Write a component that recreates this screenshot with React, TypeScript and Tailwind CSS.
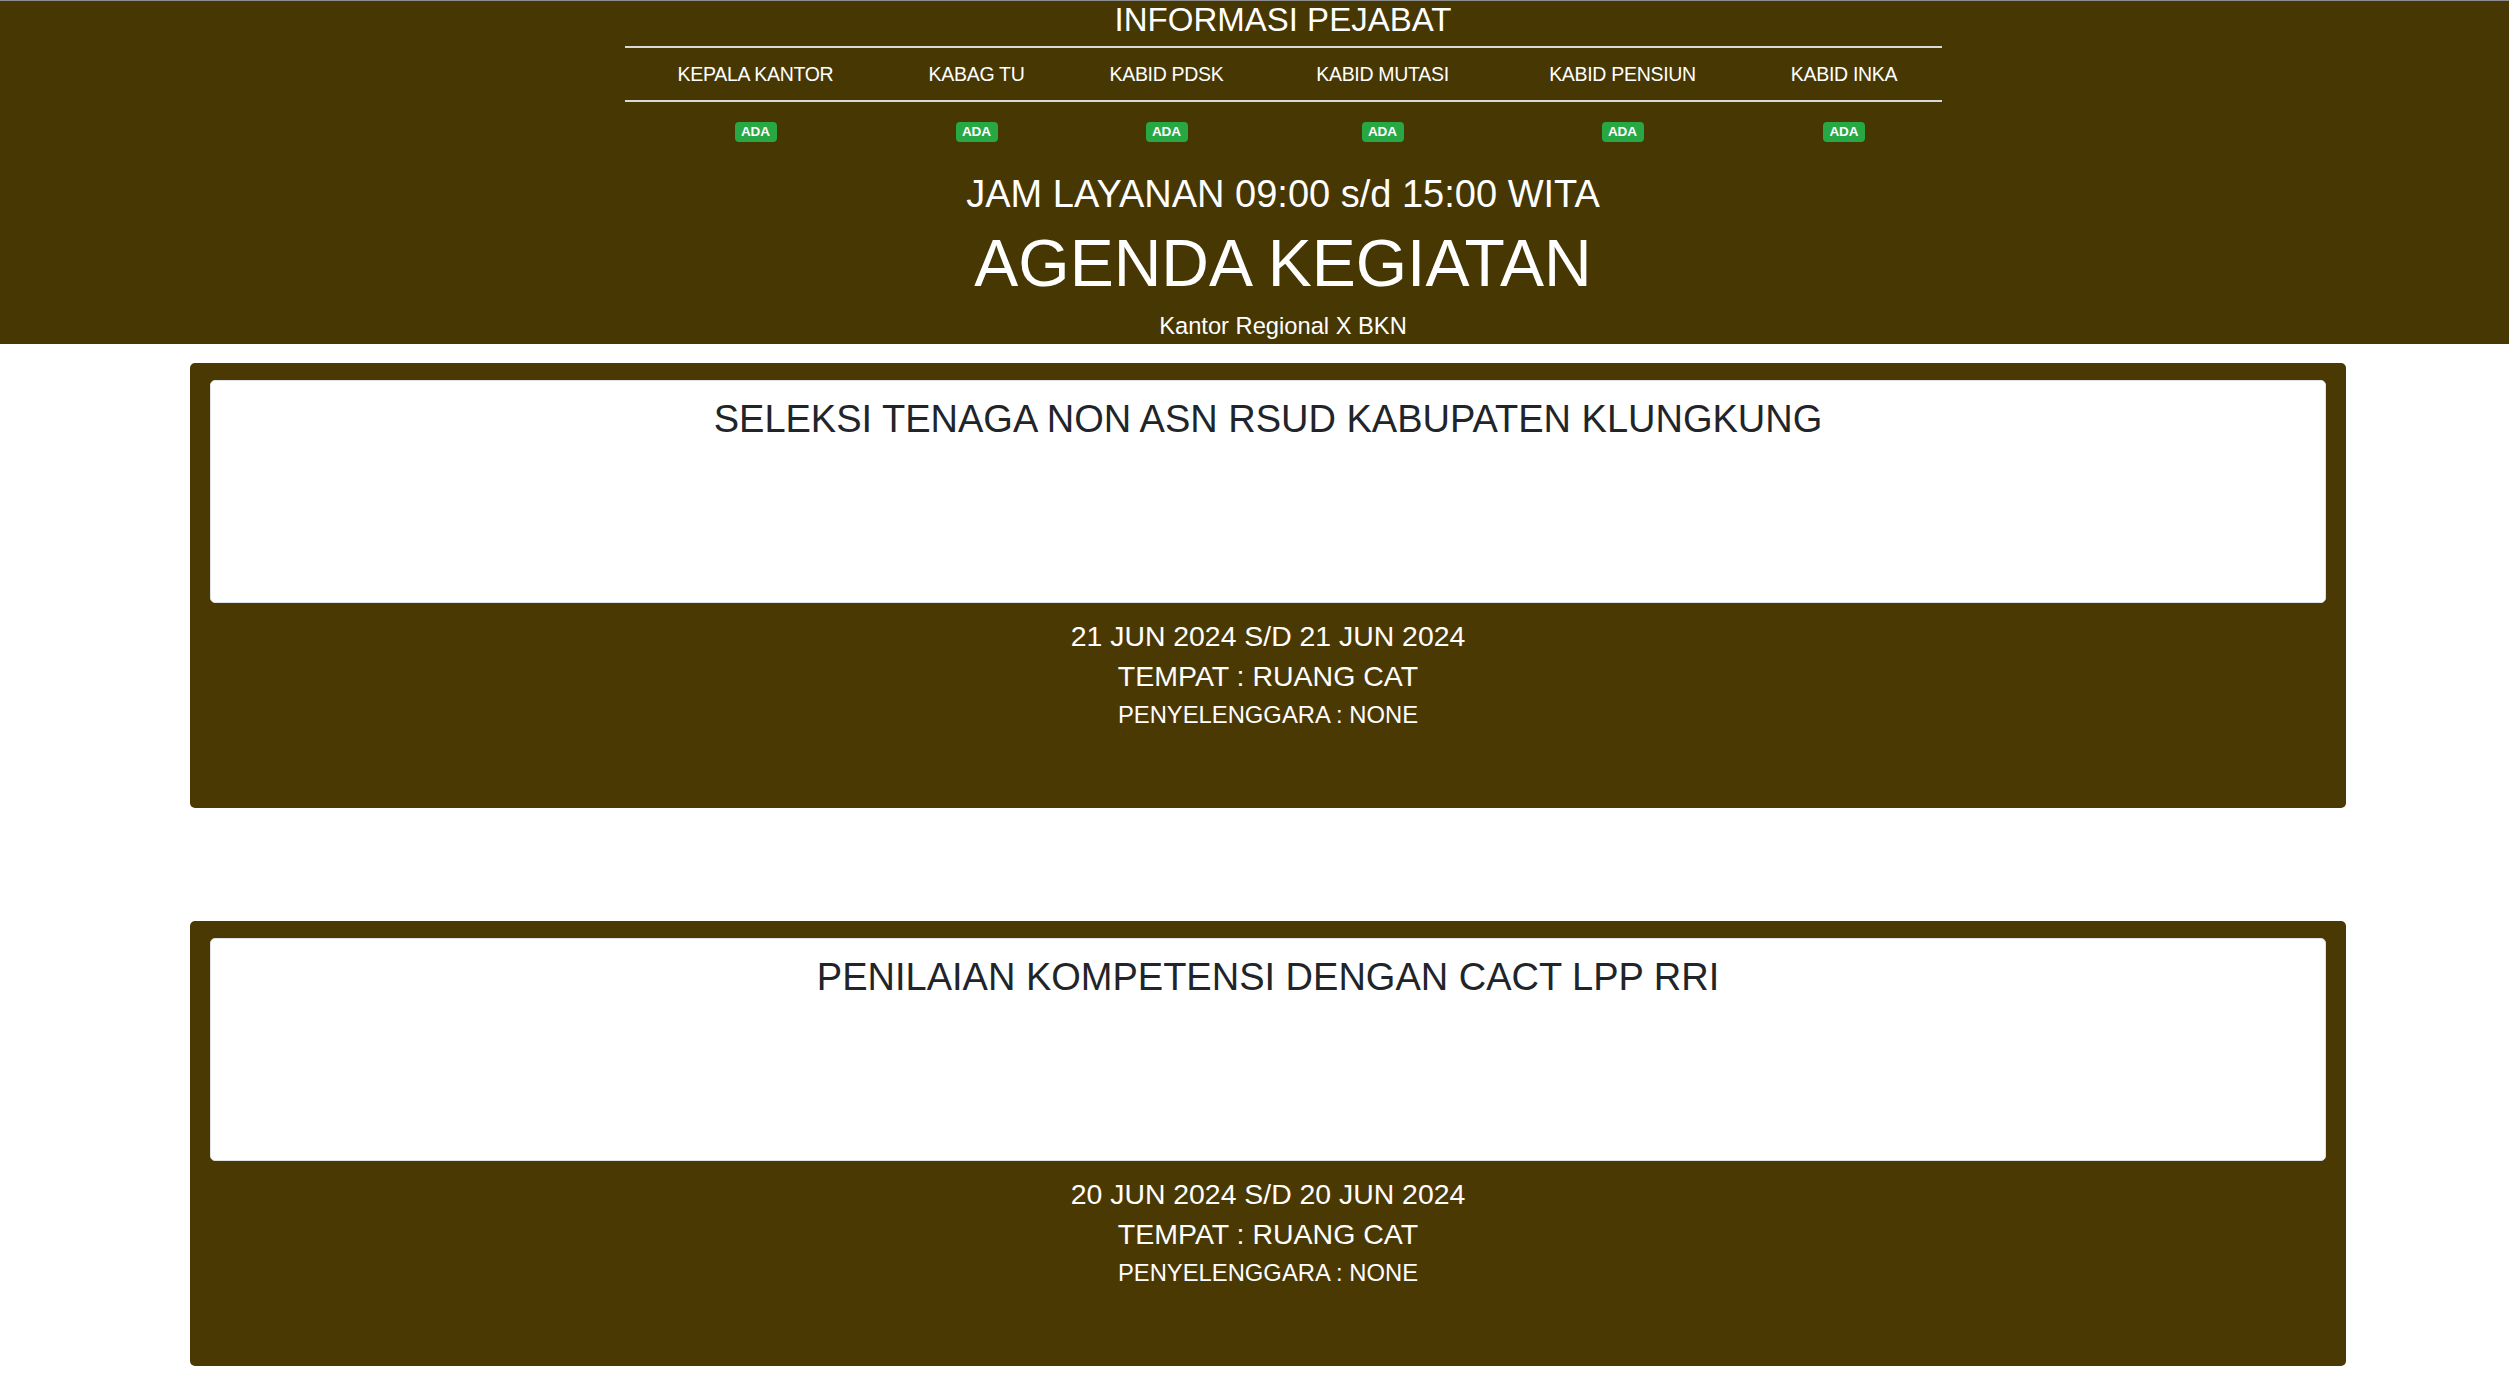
import { FunctionComponent } from 'react';

interface Pejabat {
  label: string;
  width: string;
  status: string;
}

interface Agenda {
  title: string;
  tanggal: string;
  tempat: string;
  penyelenggara: string;
}

const pejabatList: Pejabat[] = [
  { label: 'KEPALA KANTOR', width: 'w-[262px]', status: 'ADA' },
  { label: 'KABAG TU', width: 'w-[180px]', status: 'ADA' },
  { label: 'KABID PDSK', width: 'w-[200px]', status: 'ADA' },
  { label: 'KABID MUTASI', width: 'w-[232px]', status: 'ADA' },
  { label: 'KABID PENSIUN', width: 'w-[248px]', status: 'ADA' },
  { label: 'KABID INKA', width: 'w-[195px]', status: 'ADA' },
];

const agendaList: Agenda[] = [
  {
    title: 'SELEKSI TENAGA NON ASN RSUD KABUPATEN KLUNGKUNG',
    tanggal: '21 JUN 2024 S/D 21 JUN 2024',
    tempat: 'RUANG CAT',
    penyelenggara: 'NONE',
  },
  {
    title: 'PENILAIAN KOMPETENSI DENGAN CACT LPP RRI',
    tanggal: '20 JUN 2024 S/D 20 JUN 2024',
    tempat: 'RUANG CAT',
    penyelenggara: 'NONE',
  },
];

const InfoPejabat: FunctionComponent = () => (
  <header className="bg-[#463703] border-t border-[#8c8c8c] text-white pl-[57px] pb-[4px]">
    <h3 className="text-center text-[33px] leading-[37px] font-normal">INFORMASI PEJABAT</h3>

    <div className="mx-auto mt-[8px] w-[1317px]">
      <div className="flex border-y-2 border-[#d9d9d9] h-[56px] items-center pt-[2px]">
        {pejabatList.map((item) => (
          <div key={item.label} className={`${item.width} text-center text-[19.5px] tracking-[-0.3px]`}>
            {item.label}
          </div>
        ))}
      </div>
      <div className="flex h-[56px] items-center pt-[3px]">
        {pejabatList.map((item) => (
          <div key={item.label} className={`${item.width} flex justify-center`}>
            <span className="bg-[#28a745] rounded-[4px] h-[20px] w-[42px] flex items-center justify-center text-[13.5px] font-bold leading-none">
              {item.status}
            </span>
          </div>
        ))}
      </div>
    </div>

    <p className="mt-[14px] text-center text-[38px] leading-[44px]">JAM LAYANAN 09:00 s/d 15:00 WITA</p>
    <h1 className="mt-[10px] text-center text-[66px] leading-[74px]">AGENDA KEGIATAN</h1>
    <p className="mt-[12px] text-center text-[23.7px] leading-[28px]">Kantor Regional X BKN</p>
  </header>
);

const AgendaCard: FunctionComponent<{ agenda: Agenda }> = ({ agenda }) => (
  <section className="bg-[#4b3903] rounded-[5px] pt-[17px] pb-[79px] px-[20px] text-white text-center">
    <div className="bg-white border border-[#dee2e6] rounded-[5px] h-[223px] pt-[16px]">
      <h5 className="text-[#212529] text-[38px] leading-[45px]">{agenda.title}</h5>
    </div>
    <p className="mt-[16px] text-[28.4px] leading-[34px]">{agenda.tanggal}</p>
    <p className="mt-[6px] text-[28.5px] leading-[34px]">TEMPAT : {agenda.tempat}</p>
    <p className="mt-[8px] text-[23.8px] leading-[28px]">PENYELENGGARA : {agenda.penyelenggara}</p>
  </section>
);

export default function App() {
  return (
    <div className="min-h-screen bg-white font-['Liberation_Sans',Arial,sans-serif]">
      <InfoPejabat />
      <main className="pl-[190px] pr-[163px] pt-[19px] flex flex-col gap-[113px]">
        {agendaList.map((agenda) => (
          <AgendaCard key={agenda.title} agenda={agenda} />
        ))}
      </main>
    </div>
  );
}
